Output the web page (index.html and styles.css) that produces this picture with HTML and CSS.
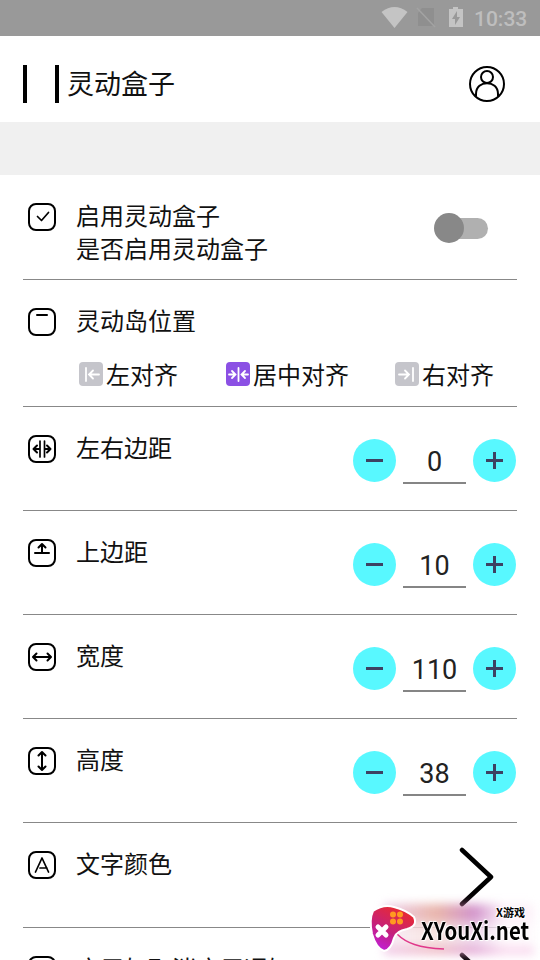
FILE: index.html
```
<!DOCTYPE html>
<html lang="zh-CN">
<head>
<meta charset="utf-8">
<title>灵动盒子</title>
<link rel="stylesheet" href="styles.css">
</head>
<body>
<div class="screen">
  <div class="status">
    <svg class="status-icons" viewBox="0 0 90 36">
      <path fill="#c4c4c4" d="M0.5 12Q13.500 2 26.500 12L13.500 28Z"/>
      <path fill="#8f8f8f" d="M41 8h12v18H37V13z"/>
      <path stroke="#a3a3a3" stroke-width="1.500" d="M36 8l18 19"/>
      <path fill="#c4c4c4" d="M72 7h5v2h5v18H68V9h4z"/>
      <path fill="#999" d="M76 11l-5 8h3v6l5-8h-3z"/>
    </svg>
    <span class="clock">10:33</span>
  </div>
  <header class="header">
    <div class="bars"></div>
    <h1 class="title">灵动盒子</h1>
    <svg class="user" viewBox="0 0 36 36"><circle cx="18" cy="18" r="17"/><circle cx="18" cy="11" r="6"/><path d="M7 30.500V28C7 13.500 29 13.500 29 28v2.500"/></svg>
  </header>
  <div class="band"></div>
  <main class="list">
    <section class="row row-enable">
      <svg class="icon" viewBox="0 0 28 28"><rect class="frame" x="1" y="1" width="26" height="26" rx="7"/><path class="thin" d="M9.500 13.500l4 4 7-8"/></svg>
      <div class="label">启用灵动盒子<br>是否启用灵动盒子</div>
      <div class="switch"><div class="thumb"></div></div>
    </section>
    <section class="row row-position">
      <svg class="icon" viewBox="0 0 28 28"><rect class="frame" x="1" y="1" width="26" height="26" rx="7"/><path d="M9 7h10"/></svg>
      <div class="position">
        <div class="label">灵动岛位置</div>
        <div class="options">
          <div class="option"><svg class="chip" viewBox="0 0 24 24"><path d="M7 6v13M20 12.500H10M14 8.500L10 12.500l4 4"/></svg>左对齐</div>
          <div class="option active"><svg class="chip" viewBox="0 0 24 24"><path d="M12.500 6v13M3 12.500h6M6 9l3.500 3.500L6 16M22 12.500h-6M19 9l-3.500 3.500L19 16"/></svg>居中对齐</div>
          <div class="option"><svg class="chip" viewBox="0 0 24 24"><path d="M18 6v13M4 12.500h10M10 8.500l4 4-4 4"/></svg>右对齐</div>
        </div>
      </div>
    </section>
    <section class="row">
      <svg class="icon" viewBox="0 0 28 28"><rect class="frame" x="1" y="1" width="26" height="26" rx="7"/><path class="thin" d="M12 6v16M16.500 6v16"/><path d="M11 14H6M9 10.500L5.500 14 9 17.500M17 14h5.500M19 10.500l3.500 3.500-3.500 3.500"/></svg>
      <div class="label">左右边距</div>
      <div class="stepper"><div class="btn minus"></div><div class="value">0</div><div class="btn plus"></div></div>
    </section>
    <section class="row">
      <svg class="icon" viewBox="0 0 28 28"><rect class="frame" x="1" y="1" width="26" height="26" rx="7"/><path d="M7 14h14M14 14V5.500M10.500 8.500L14 5l3.500 3.500"/></svg>
      <div class="label">上边距</div>
      <div class="stepper"><div class="btn minus"></div><div class="value">10</div><div class="btn plus"></div></div>
    </section>
    <section class="row">
      <svg class="icon" viewBox="0 0 28 28"><rect class="frame" x="1" y="1" width="26" height="26" rx="7"/><path d="M5.500 14h17M8.500 10.500L5 14l3.500 3.500M19.500 10.500L23 14l-3.500 3.500"/></svg>
      <div class="label">宽度</div>
      <div class="stepper"><div class="btn minus"></div><div class="value">110</div><div class="btn plus"></div></div>
    </section>
    <section class="row">
      <svg class="icon" viewBox="0 0 28 28"><rect class="frame" x="1" y="1" width="26" height="26" rx="7"/><path d="M14 5.500v17M10.500 8.500L14 5l3.500 3.500M10.500 19.500L14 23l3.500-3.500"/></svg>
      <div class="label">高度</div>
      <div class="stepper"><div class="btn minus"></div><div class="value">38</div><div class="btn plus"></div></div>
    </section>
    <section class="row row-color">
      <svg class="icon" viewBox="0 0 28 28"><rect class="frame" x="1" y="1" width="26" height="26" rx="7"/><path class="thin" d="M7.500 21L14 7 20.500 21M12 17h7"/></svg>
      <div class="label">文字颜色</div>
      <svg class="arrow" viewBox="0 0 35 60"><path d="M3 3l29 27L3 57"/></svg>
    </section>
    <section class="row row-last">
      <svg class="icon" viewBox="0 0 28 28"><rect class="frame" x="1" y="1" width="26" height="26" rx="7"/></svg>
      <div class="label">应用如取消应用通知</div>
      <svg class="arrow" viewBox="0 0 35 60"><path d="M3 3l29 27L3 57"/></svg>
    </section>
  </main>
  <div class="watermark">
    <div class="glow"></div>
    <svg class="pad" viewBox="0 0 180 60">
      <defs><linearGradient id="pad" x1="0" y1="1" x2=".5" y2="0"><stop offset="0" stop-color="#c020ee"/><stop offset=".5" stop-color="#c4207e"/><stop offset="1" stop-color="#e62a35"/></linearGradient></defs>
      <path fill="none" stroke="#e0388a" stroke-width="1.500" d="M45 34C54 43 67 48 92 49"/>
      <path fill="url(#pad)" stroke="#fff" stroke-width="2" d="M21 11Q31 4 42 7Q54 10 62 17Q66 26 55 29Q44 31 42 38Q39 50 32 51Q24 48 20 34Q17 19 21 11Z"/>
      <g fill="#ff9a20"><circle cx="41" cy="14.500" r="3"/><circle cx="48" cy="14.500" r="3"/><circle cx="41" cy="21.500" r="3"/><circle cx="48" cy="21.500" r="3"/></g>
      <path stroke="#fff" stroke-width="5" stroke-linecap="round" d="M26 27l8 8M34 27l-8 8"/>
    </svg>
    <span class="mark-small">X游戏</span>
    <span class="mark-big">XYouXi.net</span>
  </div>
</div>
</body>
</html>
```
FILE: styles.css
```
* { box-sizing: border-box; }
body { margin: 0; background: #fff; }
.screen {
  position: relative;
  width: 540px;
  height: 960px;
  overflow: hidden;
  font-family: "Noto Sans CJK SC", sans-serif;
  color: #111;
}
svg { display: block; flex: none; }
.status {
  height: 36px;
  background: #999;
  display: flex;
  align-items: center;
  justify-content: flex-end;
  padding-right: 12px;
}
.status-icons { width: 90px; height: 36px; margin-right: 3px; }
.clock { font: 500 21px/38px Roboto, sans-serif; color: #bebebe; width: 54px; white-space: nowrap; padding-top: 1px; }
.header { height: 86px; display: flex; align-items: flex-start; padding: 29px 35px 0 23px; }
.bars { width: 36px; height: 38px; border: solid #000; border-width: 0 4px; }
.title { margin: -2px 0 0 8px; font-size: 27px; font-weight: 400; line-height: 40px; flex: 1; }
.user { width: 36px; height: 36px; margin-top: 1px; fill: none; stroke: #000; stroke-width: 2; }
.band { height: 53px; background: #f0f0f0; }
.list { padding: 0 23px; }
.row { display: flex; align-items: flex-start; height: 104px; padding-left: 5px; border-bottom: 1px solid #888; }
.icon { width: 28px; height: 28px; margin-top: 28px; fill: none; stroke: #000; stroke-width: 2; stroke-linecap: round; stroke-linejoin: round; }
.icon .thin { stroke-width: 1.7; }
.label { margin: 23px 0 0 20px; font-size: 24px; line-height: 33px; flex: 1; white-space: nowrap; }
.row-enable, .row-color { height: 105px; }
.row-position { height: 127px; }
.switch { width: 52px; height: 21px; margin: 43px 29px 0 0; border-radius: 11px; background: linear-gradient(90deg, transparent 10px, #b0b0b0 10px); display: flex; align-items: center; }
.thumb { width: 30px; height: 30px; border-radius: 50%; background: #888; margin: -1px 0 0 -2px; flex: none; }
.position { flex: 1; }
.options { display: flex; justify-content: space-between; margin: 21px 23px 0 23px; }
.option { display: flex; align-items: flex-start; gap: 3px; font-size: 24px; line-height: 33px; white-space: nowrap; }
.active { margin-right: -2px; }
.chip { width: 24px; height: 24px; border-radius: 4px; background: #c5c5cb; fill: none; stroke: #fff; stroke-width: 1.8; stroke-linecap: round; margin-top: 5px; }
.active .chip { background: #8b50e4; }
.stepper { display: flex; align-items: flex-start; gap: 7px; margin: 32px 1px 0 0; }
.btn {
  width: 43px;
  height: 43px;
  border-radius: 50%;
  background-color: #58f8ff;
  background-image: linear-gradient(#3d4262, #3d4262);
  background-size: 17px 3px;
  background-position: center;
  background-repeat: no-repeat;
}
.plus { background-image: linear-gradient(#3d4262, #3d4262), linear-gradient(#3d4262, #3d4262); background-size: 17px 3px, 3px 17px; }
.value { width: 63px; height: 45px; border-bottom: 2px solid #858585; font: 27px/47px Roboto, sans-serif; text-align: center; color: #222; }
.arrow { width: 35px; height: 60px; margin: 24px 23px 0 0; fill: none; stroke: #000; stroke-width: 4.5; stroke-linecap: round; stroke-linejoin: round; }
.row-last { border: 0; }
.watermark { position: absolute; left: 352px; top: 900px; width: 188px; height: 60px; }
.glow {
  position: absolute;
  left: 32px;
  top: 4px;
  width: 150px;
  height: 50px;
  filter: blur(5px);
  background: linear-gradient(rgba(255,255,255,0) 25%, rgba(255,255,255,.65) 50%, rgba(255,255,255,.65) 80%, rgba(232,110,190,.35)), linear-gradient(90deg, rgba(215,150,215,.45), rgba(225,155,140,.75) 35%, rgba(190,100,180,.7) 60%, rgba(250,220,240,.4) 80%);
}
.pad { position: absolute; left: 0; top: 0; width: 180px; height: 60px; }
.mark-small, .mark-big { position: absolute; white-space: nowrap; color: #000; text-shadow: 0 0 2px #fff, 1px 1px 1px #fff, -1px -1px 1px #fff; }
.mark-small { left: 144px; top: 6px; font: 700 11px/12px "Noto Sans CJK SC", sans-serif; }
.mark-big { left: 69px; top: 18px; font: 700 24px/24px "Noto Sans CJK SC", sans-serif; transform: scaleX(.85); transform-origin: 0 0; }
```
